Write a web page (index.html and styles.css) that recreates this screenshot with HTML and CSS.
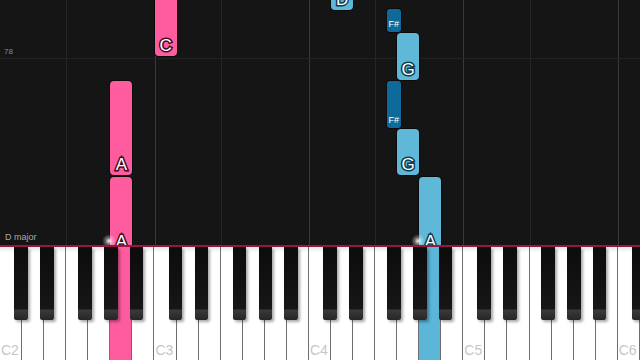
FILE: index.html
```html
<!DOCTYPE html>
<html lang="en">
<head>
  <meta charset="UTF-8">
  <title>Piano Roll</title>
  <link rel="stylesheet" href="styles.css">
</head>
<body>

<div class="app">
  <!-- falling notes -->
  <div class="roll" id="roll">
    <span class="bar-num">78</span>
    <span class="key-sig">D major</span>
  </div>
  <!-- piano -->
  <div class="keyboard" id="keyboard"></div>
</div>

<script>
  const W = 640 / 29;
  const OCT = W * 7;
  const whiteNames = ['C', 'D', 'E', 'F', 'G', 'A', 'B'];
  const blackOffsets = { 'C#': 14, 'D#': 40, 'F#': 78, 'G#': 104, 'A#': 129.5 };
  const BLACK_W = 13.5;

  const pressed = { 'A2': 'pink', 'A4': 'blue' };

  const notes = [
    { name: 'C', oct: 3, top: -10, height: 66, color: 'pink' },
    { name: 'A', oct: 2, top: 81, height: 94, color: 'pink' },
    { name: 'A', oct: 2, top: 177, height: 75, color: 'pink' },
    { name: 'D', oct: 4, top: -40, height: 50, color: 'blue' },
    { name: 'F#', oct: 4, top: 9, height: 23, color: 'navy' },
    { name: 'G', oct: 4, top: 33, height: 47, color: 'blue' },
    { name: 'F#', oct: 4, top: 81, height: 47, color: 'navy' },
    { name: 'G', oct: 4, top: 129, height: 46, color: 'blue' },
    { name: 'A', oct: 4, top: 177, height: 75, color: 'blue' }
  ];

  function noteX(name, oct) {
    const base = (oct - 2) * OCT;
    if (name.length > 1) return base + blackOffsets[name];
    return base + whiteNames.indexOf(name) * W;
  }

  // grid lines on C and F
  const roll = document.getElementById('roll');
  for (let i = 1; i < 29; i++) {
    const n = whiteNames[i % 7];
    if (n !== 'C' && n !== 'F') continue;
    const line = document.createElement('div');
    line.className = n === 'C' ? 'vline octave' : 'vline';
    line.style.left = (i * W).toFixed(1) + 'px';
    roll.appendChild(line);
  }
  const hline = document.createElement('div');
  hline.className = 'hline';
  roll.appendChild(hline);

  notes.forEach(n => {
    const el = document.createElement('div');
    const black = n.name.length > 1;
    el.className = 'note ' + n.color;
    el.style.left = noteX(n.name, n.oct).toFixed(1) + 'px';
    el.style.width = (black ? BLACK_W : W).toFixed(1) + 'px';
    el.style.top = n.top + 'px';
    el.style.height = n.height + 'px';
    el.innerHTML = `<span class="${black ? 'note-name small' : 'note-name'}">${n.name}</span>`;
    roll.appendChild(el);
  });

  ['spark pink-spark', 'spark blue-spark'].forEach(c => {
    const s = document.createElement('div');
    s.className = c;
    roll.appendChild(s);
  });

  // keyboard
  const kb = document.getElementById('keyboard');
  for (let i = 0; i < 29; i++) {
    const name = whiteNames[i % 7];
    const oct = 2 + Math.floor(i / 7);
    const key = document.createElement('div');
    key.className = 'white-key';
    if (pressed[name + oct]) key.classList.add(pressed[name + oct]);
    if (name === 'C') key.innerHTML = `<span class="key-label">C${oct}</span>`;
    kb.appendChild(key);
  }
  for (let oct = 2; oct <= 6; oct++) {
    Object.keys(blackOffsets).forEach(b => {
      const x = noteX(b, oct);
      if (x > 640) return;
      const key = document.createElement('div');
      key.className = 'black-key';
      key.style.left = x.toFixed(1) + 'px';
      kb.appendChild(key);
    });
  }
</script>

</body>
</html>
```

FILE: styles.css
```css
body {
  margin: 0;
  background-color: #151515;
  font-family: "Liberation Sans", Arial, sans-serif;
}

.app {
  width: 640px;
  height: 360px;
  overflow: hidden;
}

.roll {
  position: relative;
  height: 245px;
  background-color: #151515;
  border-bottom: 2px solid #9a1640;
  overflow: hidden;
}

.vline {
  position: absolute;
  top: 0;
  bottom: 0;
  width: 1px;
  background-color: #262626;
}

.vline.octave {
  background-color: #3a3a3a;
}

.hline {
  position: absolute;
  left: 0;
  right: 0;
  top: 58px;
  height: 1px;
  background-color: #232323;
}

.bar-num {
  position: absolute;
  left: 4px;
  top: 47px;
  font-size: 8px;
  color: #8a8a8a;
  z-index: 2;
}

.key-sig {
  position: absolute;
  left: 5px;
  top: 232px;
  font-size: 9px;
  color: #a8a8a8;
  z-index: 2;
}

.note {
  position: absolute;
  box-sizing: border-box;
  border-radius: 4px;
  box-shadow: 0 0 0 1px #0b0b0b;
  z-index: 1;
}

.note.pink {
  background-color: #ff5c9f;
}

.note.blue {
  background-color: #5fb8d8;
}

.note.navy {
  background-color: #0f6a9c;
  border-radius: 3px;
}

.note-name {
  position: absolute;
  left: 0;
  right: 0;
  bottom: 2px;
  text-align: center;
  font-size: 17px;
  line-height: 17px;
  color: #fff;
  -webkit-text-stroke: 3px #3d0c22;
  paint-order: stroke fill;
}

.note.blue .note-name {
  -webkit-text-stroke: 3px #0d3b50;
}

.note-name.small {
  bottom: 3px;
  font-size: 9px;
  line-height: 9px;
  -webkit-text-stroke: 0;
}

.spark {
  position: absolute;
  top: 234px;
  width: 14px;
  height: 14px;
  border-radius: 50%;
  background: radial-gradient(circle, rgba(255, 255, 255, 0.95) 0%, rgba(255, 255, 255, 0.35) 35%, rgba(255, 255, 255, 0) 70%);
  z-index: 3;
}

.pink-spark {
  left: 102px;
}

.blue-spark {
  left: 411px;
}

.keyboard {
  position: relative;
  display: flex;
  height: 113px;
}

.white-key {
  position: relative;
  flex: 1;
  background: linear-gradient(#e8e8e8, #ffffff 6px);
  border-right: 1px solid #6e6e6e;
}

.white-key.pink {
  background: #ff5c9f;
}

.white-key.blue {
  background: #5bb6d8;
}

.key-label {
  position: absolute;
  left: 1px;
  bottom: 2px;
  font-size: 14px;
  color: #c6c6c6;
}

.black-key {
  position: absolute;
  top: 0;
  width: 13.5px;
  height: 73px;
  background: linear-gradient(#0c0c0c, #161616 62px, #3a3a3a 63px, #262626);
  border-radius: 0 0 2px 2px;
  box-shadow: 2px 2px 3px rgba(0, 0, 0, 0.35);
}
```
